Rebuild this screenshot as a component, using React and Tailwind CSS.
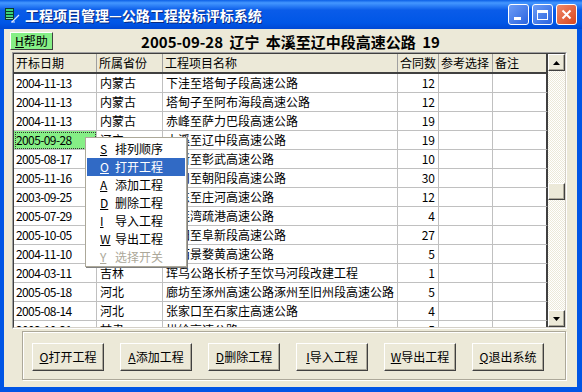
import { Fragment } from 'react';

const rows = [
  ['2004-11-13', '内蒙古', '下洼至塔甸子段高速公路', '12'],
  ['2004-11-13', '内蒙古', '塔甸子至阿布海段高速公路', '12'],
  ['2004-11-13', '内蒙古', '赤峰至萨力巴段高速公路', '19'],
  ['2005-09-28', '辽宁', '本溪至辽中段高速公路', '19'],
  ['2005-08-17', '辽宁', '阜新至彰武高速公路', '10'],
  ['2005-11-16', '辽宁', '锦州至朝阳段高速公路', '30'],
  ['2003-09-25', '辽宁', '丹东至庄河高速公路', '12'],
  ['2005-07-29', '辽宁', '大连湾疏港高速公路', '4'],
  ['2005-10-05', '辽宁', '沈阳至阜新段高速公路', '27'],
  ['2004-11-10', '江西', '江西景婺黄高速公路', '5'],
  ['2004-03-11', '吉林', '珲乌公路长桥子至饮马河段改建工程', '1'],
  ['2005-05-18', '河北', '廊坊至涿州高速公路涿州至旧州段高速公路', '5'],
  ['2005-08-14', '河北', '张家口至石家庄高速公路', '4'],
  ['2002-10-21', '甘肃', '拱绘高速公路', '5'],
];

const menuItems = [
  ['S', '排列顺序'],
  ['O', '打开工程'],
  ['A', '添加工程'],
  ['D', '删除工程'],
  ['I', '导入工程'],
  ['W', '导出工程'],
  ['Y', '选择开关'],
];

const buttons = [
  ['O', '打开工程'],
  ['A', '添加工程'],
  ['D', '删除工程'],
  ['I', '导入工程'],
  ['W', '导出工程'],
  ['Q', '退出系统'],
];

function ScrollButton({ down }) {
  return (
    <div className="w-[17px] h-[17px] shrink-0 bg-[#ece9d8] border border-t-white border-l-white border-r-[#404040] border-b-[#404040] shadow-[inset_-1px_-1px_0_#aca899] flex items-center justify-center">
      <svg width="7" height="4" viewBox="0 0 7 4">
        {down ? <polygon points="0,0 7,0 3.5,4" fill="#000" /> : <polygon points="3.5,0 7,4 0,4" fill="#000" />}
      </svg>
    </div>
  );
}

export default function App() {
  return (
    <div className="relative w-[582px] h-[392px] flex flex-col bg-[#0055e5] overflow-hidden font-['Noto_Sans_CJK_SC',sans-serif] text-[12px] text-black">
      {/* Title bar */}
      <div className="h-[29px] shrink-0 flex items-center pl-[4px] pr-[5px] bg-[linear-gradient(180deg,#0b5fe6_0%,#4497ff_10%,#0a5ce9_35%,#0056e6_80%,#0048d4_100%)]">
        <svg width="16" height="16" viewBox="0 0 16 16" className="shrink-0">
          <rect x="1" y="1" width="9" height="12" fill="#0b3b2e" />
          <rect x="2" y="2" width="7" height="2" fill="#3bd47a" />
          <rect x="2" y="5" width="7" height="2" fill="#3bd47a" />
          <rect x="2" y="8" width="7" height="2" fill="#3bd47a" />
          <rect x="2" y="11" width="7" height="1" fill="#8fe8b0" />
          <line x1="8" y1="15" x2="15" y2="8" stroke="#dfe7ff" strokeWidth="1.2" />
          <line x1="7" y1="15" x2="11" y2="15" stroke="#dfe7ff" strokeWidth="1" />
        </svg>
        <span className="ml-[5px] text-white font-bold text-[14px] leading-none [text-shadow:1px_1px_0_#0a2a80]">
          工程项目管理—公路工程投标评标系统
        </span>
        <div className="ml-auto flex gap-[3px]">
          <div className="w-[21px] h-[21px] rounded-[3px] border border-white bg-[linear-gradient(135deg,#6d9df5,#2a64e0)] flex items-end pl-[5px] pb-[4px]">
            <div className="w-[7px] h-[3px] bg-white" />
          </div>
          <div className="w-[21px] h-[21px] rounded-[3px] border border-white bg-[linear-gradient(135deg,#6d9df5,#2a64e0)] flex items-center justify-center">
            <div className="w-[11px] h-[10px] border border-white border-t-[3px]" />
          </div>
          <div className="w-[21px] h-[21px] rounded-[3px] border border-white bg-[linear-gradient(135deg,#f08a6a,#d8461f)] flex items-center justify-center">
            <svg width="11" height="11" viewBox="0 0 11 11">
              <path d="M1.5 1.5 L9.5 9.5 M9.5 1.5 L1.5 9.5" stroke="#fff" strokeWidth="2" />
            </svg>
          </div>
        </div>
      </div>

      {/* Window body */}
      <div className="flex-1 ml-[4px] mr-[5px] mb-[5px] bg-[#ece9d8] flex flex-col">
        {/* Top line */}
        <div className="h-[23px] shrink-0 grid grid-cols-[1fr_auto_1fr] items-start">
          <div className="pl-[6px] pt-[3px]">
            <div className="w-[43px] h-[18px] bg-[#86ef86] border border-t-white border-l-white border-r-[#404040] border-b-[#404040] flex items-center justify-center text-[12px] leading-none">
              <span className="underline">H</span>帮助
            </div>
          </div>
          <div className="pt-[5px] font-bold text-[15px] leading-none whitespace-pre [word-spacing:3px]">
            2005-09-28 辽宁 本溪至辽中段高速公路 19
          </div>
          <div />
        </div>

        {/* Grid */}
        <div className="ml-[8px] w-[555px] h-[277px] shrink-0 border border-t-[#a0a0a0] border-l-[#a0a0a0] border-r-white border-b-white">
          <div className="w-full h-full border border-t-[#404040] border-l-[#404040] border-r-[#d4d0c8] border-b-[#d4d0c8] flex overflow-hidden">
            <div className="w-[534px] shrink-0 flex flex-col">
              <div className="h-[20px] shrink-0 flex bg-[#ece9d8] border-b-2 border-[#404040]">
                {[
                  ['开标日期', 'w-[83px]'],
                  ['所属省份', 'w-[66px]'],
                  ['工程项目名称', 'w-[235px]'],
                  ['合同数', 'w-[41px]'],
                  ['参考选择', 'w-[54px]'],
                  ['备注', 'w-[55px]'],
                ].map(([t, w], i) => (
                  <div
                    key={t}
                    className={`${w} shrink-0 pl-[2px] leading-[18px] whitespace-nowrap overflow-hidden ${i === 5 ? 'border-r-2 border-[#404040]' : 'border-r border-[#a0a0a0]'}`}
                  >
                    {t}
                  </div>
                ))}
              </div>
              {rows.map((r, idx) => (
                <div key={idx} className="h-[19px] shrink-0 flex bg-white">
                  <div
                    className={`w-[83px] shrink-0 border-r border-b border-[#c0c0c0] pl-[2px] leading-[18px] tracking-[-0.6px] ${idx === 3 ? 'bg-[#86ef86] outline outline-1 outline-dotted outline-offset-[-2px] outline-[#333]' : ''}`}
                  >
                    {r[0]}
                  </div>
                  <div className="w-[66px] shrink-0 border-r border-b border-[#c0c0c0] pl-[3px] leading-[18px] whitespace-nowrap overflow-hidden">
                    {r[1]}
                  </div>
                  <div className="w-[235px] shrink-0 border-r border-b border-[#c0c0c0] pl-[3px] leading-[18px] whitespace-nowrap overflow-hidden">
                    {r[2]}
                  </div>
                  <div className="w-[41px] shrink-0 border-r border-b border-[#c0c0c0] pr-[3px] text-right leading-[18px]">
                    {r[3]}
                  </div>
                  <div className="w-[54px] shrink-0 border-r border-b border-[#c0c0c0]" />
                  <div className="w-[55px] shrink-0 border-b border-[#c0c0c0] border-r-2 border-r-[#404040]" />
                </div>
              ))}
            </div>
            {/* Scrollbar */}
            <div className="w-[17px] shrink-0 flex flex-col bg-[repeating-conic-gradient(#ffffff_0%_25%,#ece9d8_0%_50%)] bg-[length:2px_2px]">
              <ScrollButton />
              <div className="flex-1">
                <div className="mt-[112px] w-[17px] h-[17px] bg-[#ece9d8] border border-t-white border-l-white border-r-[#404040] border-b-[#404040] shadow-[inset_-1px_-1px_0_#aca899]" />
              </div>
              <ScrollButton down />
            </div>
          </div>
        </div>

        {/* Bottom buttons */}
        <div className="ml-[18px] mt-[2px] w-[544px] h-[49px] border border-[#aca899] shadow-[inset_1px_1px_0_#fff,1px_1px_0_#fff] flex items-start pl-[9px] pt-[11px] gap-[16px]">
          {buttons.map(([k, t]) => (
            <div
              key={k}
              className="w-[72px] h-[28px] shrink-0 bg-[#ece9d8] border border-t-white border-l-white border-r-[#404040] border-b-[#404040] shadow-[inset_-1px_-1px_0_#aca899] flex items-center justify-center leading-none"
            >
              <span className="underline">{k}</span>
              {t}
            </div>
          ))}
        </div>
      </div>

      {/* Context menu */}
      <div className="absolute left-[85px] top-[137px] w-[102px] h-[130px] bg-white border border-[#aca899] shadow-[1px_1px_0_#808080] pt-[2px] px-[1px]">
        {menuItems.map(([k, t], i) => (
          <div
            key={k}
            className={`h-[18px] flex items-center pl-[13px] leading-none ${i === 1 ? 'bg-[#316ac5] text-white' : ''} ${i === 6 ? 'text-[#aca899] [text-shadow:1px_1px_0_#fff]' : ''}`}
          >
            <span className="w-[6px] underline">{k}</span>
            <span className="ml-[9px]">{t}</span>
          </div>
        ))}
      </div>
    </div>
  );
}
